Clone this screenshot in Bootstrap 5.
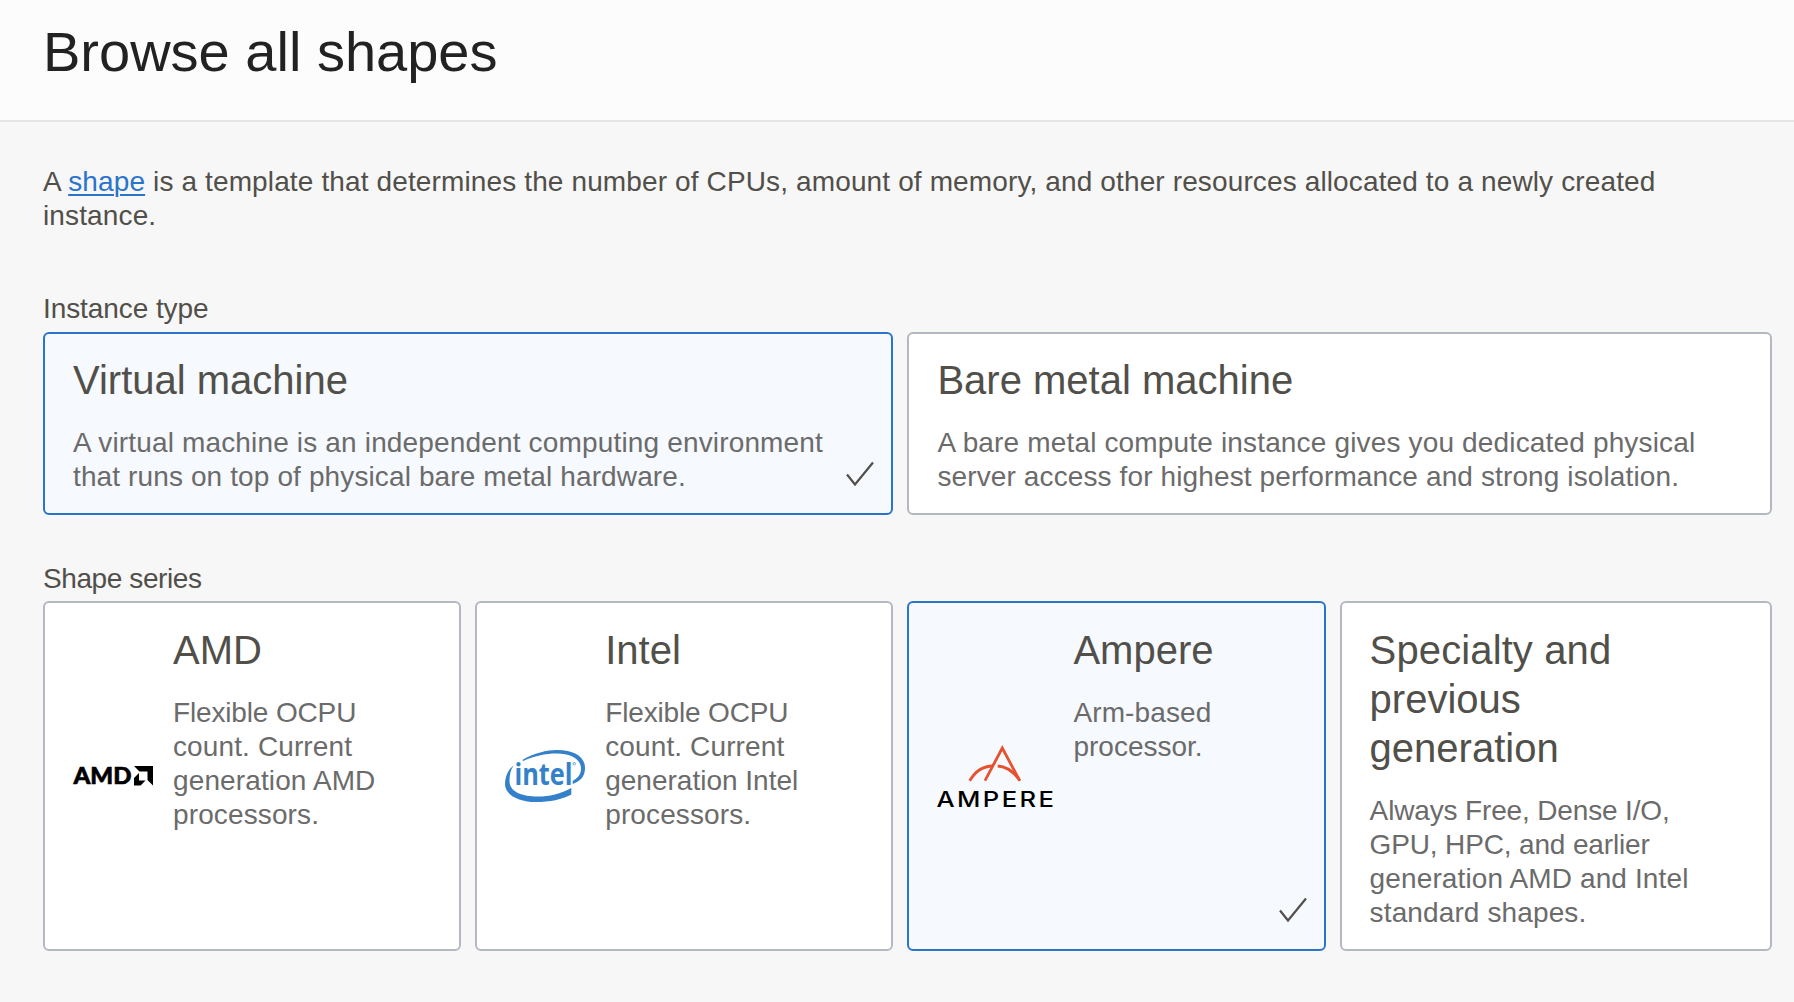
<!DOCTYPE html>
<html lang="en">
<head>
<meta charset="utf-8">
<meta name="viewport" content="width=device-width, initial-scale=1">
<title>Browse all shapes</title>
<link href="https://cdn.jsdelivr.net/npm/bootstrap@5.3.0/dist/css/bootstrap.min.css" rel="stylesheet">
<style>
body{font-family:"Liberation Sans",Arial,sans-serif;font-size:28px;line-height:34px;color:#514f4a;background:#f7f7f7}
.page-head{height:122px;background:#fcfcfc;border-bottom:2px solid #e5e5e5;padding:18px 43px 0}
.page-head h1{font-size:56px;line-height:68px;color:#222;font-weight:400}
.page-body{padding:43px 22.2px 0 43px}
.intro{margin-bottom:59px;letter-spacing:.13px}
.intro a{color:#2a74cc;text-decoration-thickness:1.5px;text-underline-offset:3px}
.field-label{margin-bottom:6px;letter-spacing:-.08px}
.series-label{margin-bottom:5px;letter-spacing:-.4px}
.type-row{margin-bottom:47px}
.tile-col{padding-right:14px}
.tile-col:last-child{padding-right:0}
.tile{position:relative;background:#fff;border:2px solid #b4b9c1;border-radius:6px;padding:22px 28px 19px}
.tile.selected{background:#f6f9fe;border-color:#2a74cc}
.tile h2{font-size:40px;line-height:49px;font-weight:400;margin-bottom:21px}
.tile p{color:#6b6b6b;white-space:nowrap}
.wide-text{letter-spacing:.16px}
.line-loose{letter-spacing:.12px}
.line-tight{letter-spacing:-.15px}
.series-row .tile{min-height:350px;padding-top:23px}
.tick{position:absolute;right:15px;bottom:24px}
.logo{flex:none;align-self:center;overflow:visible;margin-bottom:5px}
.logo-gap{gap:20px}
</style>
</head>
<body>
<header class="page-head"><h1 class="mb-0">Browse all shapes</h1></header>
<main class="page-body">
  <p class="intro">A <a href="#">shape</a> is a template that determines the number of CPUs, amount of memory, and other resources allocated to a newly created<br>instance.</p>
  <div class="field-label">Instance type</div>
  <div class="row g-0 type-row">
    <div class="col-6 tile-col"><div class="tile selected h-100">
      <h2>Virtual machine</h2>
      <p class="mb-0"><span class="wide-text">A virtual machine is an independent computing environment</span><br><span class="line-loose">that runs on top of physical bare metal hardware.</span></p>
      <svg class="tick" width="32" height="30" viewBox="0 0 32 30" fill="none" stroke="#514f4a" stroke-width="2.200"><path d="M3 15.500 11 25.500 29 3.500"/></svg>
    </div></div>
    <div class="col-6 tile-col"><div class="tile h-100">
      <h2>Bare metal machine</h2>
      <p class="mb-0"><span class="wide-text">A bare metal compute instance gives you dedicated physical</span><br><span class="line-loose">server access for highest performance and strong isolation.</span></p>
    </div></div>
  </div>
  <div class="field-label series-label">Shape series</div>
  <div class="row g-0 series-row">
    <div class="col-3 tile-col"><div class="tile h-100 d-flex logo-gap">
      <svg class="logo" width="80" height="20" viewBox="0 0 80 20"><text x=".5" y="18" font-family="Lato, sans-serif" font-weight="900" font-size="22.500" stroke="#000" stroke-width=".6" textLength="58" lengthAdjust="spacingAndGlyphs">AMD</text><path d="M61 0H80V19.500L74.500 14V5.500H66.500ZM66 7 61 12V19.500H67.500L72.500 14.500H66Z"/></svg>
      <div><h2>AMD</h2>
      <p class="mb-0"><span class="line-tight">Flexible OCPU</span><br><span class="line-loose">count. Current</span><br><span class="line-loose">generation AMD</span><br><span class="line-loose">processors.</span></p></div>
    </div></div>
    <div class="col-3 tile-col"><div class="tile h-100 d-flex logo-gap">
      <svg class="logo" width="80" height="52" viewBox="0 0 80 52" fill="#3480cb"><path d="M17.300 10C29 3 42 0 52 0 70 0 80 7 80 18 80 26 76 31 67.700 34V31C73 28 76 24 76 19 76 9 66 3.500 52 3.500 40 3.500 29 6 18 11Z"/><path d="M8.500 15.500C3 20 0 27 0 34 0 45 14 52 31 52 45 52 57 49.500 66.300 44.500V38C56 44 44 46.500 33 46.500 17 46.500 4.500 42 4.500 31 4.500 25 5.500 20 8.500 15.500Z"/><text x="9.500" y="35" font-family="Open Sans, sans-serif" font-weight="700" font-size="30" textLength="58" lengthAdjust="spacingAndGlyphs">intel</text><circle cx="69.300" cy="13.700" r="1.200" fill="none" stroke="#3480cb" stroke-width=".7"/></svg>
      <div><h2>Intel</h2>
      <p class="mb-0"><span class="line-tight">Flexible OCPU</span><br><span class="line-loose">count. Current</span><br>generation Intel<br><span class="line-loose">processors.</span></p></div>
    </div></div>
    <div class="col-3 tile-col"><div class="tile selected h-100 d-flex logo-gap">
      <svg class="logo" width="116" height="62" viewBox="0 0 116 62"><g fill="none" stroke="#e6522f" stroke-width="2.800"><path d="M48 35.700 65.300 3 82.700 35.700"/><path d="M32.700 35.700C39 25 46 21 56 21M60.700 21C70 21.500 77 27 83 35.700"/></g><text x="-.5" y="61.500" font-family="Inter, sans-serif" font-weight="500" font-size="21" letter-spacing="2" textLength="120" lengthAdjust="spacingAndGlyphs">AMPERE</text></svg>
      <div><h2>Ampere</h2>
      <p class="mb-0"><span class="line-loose">Arm-based</span><br>processor.</p></div>
      <svg class="tick" width="32" height="30" viewBox="0 0 32 30" fill="none" stroke="#514f4a" stroke-width="2.200"><path d="M3 15.500 11 25.500 29 3.500"/></svg>
    </div></div>
    <div class="col-3 tile-col"><div class="tile h-100">
      <h2><span class="line-loose">Specialty and</span><br>previous<br>generation</h2>
      <p class="mb-0"><span class="line-tight">Always Free, Dense I/O,</span><br><span class="line-tight">GPU, HPC, and earlier</span><br><span class="line-loose">generation AMD and Intel</span><br><span class="line-loose">standard shapes.</span></p>
    </div></div>
  </div>
</main>
<script src="https://cdn.jsdelivr.net/npm/bootstrap@5.3.0/dist/js/bootstrap.bundle.min.js"></script>
</body>
</html>
